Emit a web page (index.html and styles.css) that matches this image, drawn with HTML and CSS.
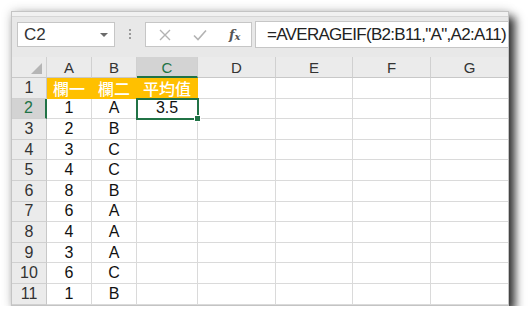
FILE: index.html
```
<!DOCTYPE html>
<html>
<head>
<meta charset="utf-8">
<link rel="stylesheet" href="styles.css">
</head>
<body>
<div class="window">
  <div class="topstrip"></div>
  <div class="fbar">
    <div class="namebox"><span class="nb-text">C2</span><span class="nb-arrow"></span></div>
    <div class="sep"><i></i><i></i><i></i></div>
    <div class="fxgroup">
      <svg class="ico" width="12" height="12" viewBox="0 0 12 12"><path d="M1 1L11 11M11 1L1 11" stroke="#b3b3b3" stroke-width="1.4" fill="none"/></svg>
      <svg class="ico" width="14" height="12" viewBox="0 0 14 12"><path d="M1 6.5L5 10.5L13 1.5" stroke="#b3b3b3" stroke-width="1.6" fill="none"/></svg>
      <span class="fx">f<sub>x</sub></span>
    </div>
    <div class="formula">=AVERAGEIF(B2:B11,"A",A2:A11)</div>
  </div>
  <div class="grid">
    <div class="hd corner"><svg width="11" height="11" viewBox="0 0 11 11"><polygon points="0,11 11,11 11,0" fill="#b5b5b5"/></svg></div>
    <div class="hd">A</div><div class="hd">B</div><div class="hd sel-col">C</div><div class="hd">D</div><div class="hd">E</div><div class="hd">F</div><div class="hd">G</div>

    <div class="rh">1</div><div class="c y">欄一</div><div class="c y">欄二</div><div class="c y">平均值</div><div class="c"></div><div class="c"></div><div class="c"></div><div class="c"></div>
    <div class="rh sel-row">2</div><div class="c">1</div><div class="c">A</div><div class="c active">3.5<span class="handle"></span></div><div class="c"></div><div class="c"></div><div class="c"></div><div class="c"></div>
    <div class="rh">3</div><div class="c">2</div><div class="c">B</div><div class="c"></div><div class="c"></div><div class="c"></div><div class="c"></div><div class="c"></div>
    <div class="rh">4</div><div class="c">3</div><div class="c">C</div><div class="c"></div><div class="c"></div><div class="c"></div><div class="c"></div><div class="c"></div>
    <div class="rh">5</div><div class="c">4</div><div class="c">C</div><div class="c"></div><div class="c"></div><div class="c"></div><div class="c"></div><div class="c"></div>
    <div class="rh">6</div><div class="c">8</div><div class="c">B</div><div class="c"></div><div class="c"></div><div class="c"></div><div class="c"></div><div class="c"></div>
    <div class="rh">7</div><div class="c">6</div><div class="c">A</div><div class="c"></div><div class="c"></div><div class="c"></div><div class="c"></div><div class="c"></div>
    <div class="rh">8</div><div class="c">4</div><div class="c">A</div><div class="c"></div><div class="c"></div><div class="c"></div><div class="c"></div><div class="c"></div>
    <div class="rh">9</div><div class="c">3</div><div class="c">A</div><div class="c"></div><div class="c"></div><div class="c"></div><div class="c"></div><div class="c"></div>
    <div class="rh">10</div><div class="c">6</div><div class="c">C</div><div class="c"></div><div class="c"></div><div class="c"></div><div class="c"></div><div class="c"></div>
    <div class="rh">11</div><div class="c">1</div><div class="c">B</div><div class="c"></div><div class="c"></div><div class="c"></div><div class="c"></div><div class="c"></div>
  </div>
</div>
</body>
</html>
```
FILE: styles.css
```
html, body {
  margin: 0;
  padding: 0;
  background: #ffffff;
}
body {
  padding: 11px 0 0 11px;
  font-family: "Liberation Sans", Arial, sans-serif;
}
.window {
  box-sizing: border-box;
  width: 498px;
  height: 295px;
  background: #e8e8e8;
  border: 1px solid #c4c4c4;
  overflow: hidden;
  box-shadow: 6px 6px 9px rgba(0,0,0,0.8), 0 0 10px rgba(0,0,0,0.18);
}
.topstrip {
  height: 4px;
  background: #f1f1f1;
  border-bottom: 1px solid #d6d6d6;
}
.fbar {
  height: 40px;
  display: flex;
  align-items: flex-start;
  padding-left: 5px;
}
.namebox {
  box-sizing: border-box;
  margin-top: 5px;
  width: 98px;
  height: 25px;
  background: #fff;
  border: 1px solid #c6c6c6;
  display: flex;
  align-items: center;
  justify-content: space-between;
  padding: 0 6px 0 6px;
}
.nb-text {
  font-size: 17px;
  color: #333;
}
.nb-arrow {
  width: 0;
  height: 0;
  border-left: 4px solid transparent;
  border-right: 4px solid transparent;
  border-top: 4px solid #6b6b6b;
  margin-top: 1px;
}
.sep {
  width: 30px;
  height: 40px;
  display: flex;
  flex-direction: column;
  align-items: center;
  justify-content: center;
  gap: 2px;
  padding-bottom: 6px;
  box-sizing: border-box;
}
.sep i {
  display: block;
  width: 2px;
  height: 2px;
  background: #9a9a9a;
}
.fxgroup {
  box-sizing: border-box;
  margin-top: 5px;
  width: 107px;
  height: 25px;
  background: #fff;
  border: 1px solid #c6c6c6;
  display: flex;
  align-items: center;
  padding-left: 13px;
}
.ico { display: block; }
.fxgroup .ico + .ico { margin-left: 22px; }
.fx {
  margin-left: 22px;
  font-family: "DejaVu Serif", "Liberation Serif", serif;
  font-style: italic;
  font-weight: bold;
  font-size: 13px;
  color: #555;
  line-height: 1;
}
.fx sub {
  font-size: 10px;
  vertical-align: -1px;
}
.formula {
  box-sizing: border-box;
  margin-top: 4px;
  margin-left: 3px;
  flex: 1;
  height: 27px;
  background: #fff;
  border: 1px solid #c6c6c6;
  border-right: none;
  font-size: 17px;
  letter-spacing: -0.7px;
  color: #222;
  display: flex;
  align-items: center;
  padding-left: 11px;
  white-space: nowrap;
}
.grid {
  display: grid;
  grid-template-columns: 35px 45px 45px 61px 78px 77px 78px 78px;
  grid-template-rows: 21px;
  grid-auto-rows: 20.6px;
  background: #fff;
}
.grid > div {
  box-sizing: border-box;
  display: flex;
  align-items: center;
  justify-content: center;
  white-space: nowrap;
}
.hd {
  background: #ebebeb;
  border-right: 1px solid #d0d0d0;
  border-bottom: 1px solid #c8c8c8;
  font-size: 15px;
  color: #333;
  padding-top: 1px;
}
.grid > .corner {
  justify-content: flex-end;
  align-items: flex-end;
  padding: 0 4px 3px 0;
}
.grid > .sel-col {
  background: #d3d3d3;
  border-bottom: 2px solid #217346;
  color: #217346;
}
.rh {
  background: #ebebeb;
  border-right: 1px solid #c8c8c8;
  border-bottom: 1px solid #d0d0d0;
  font-size: 16px;
  color: #333;
}
.grid > .sel-row {
  background: #d3d3d3;
  border-right: 2px solid #217346;
  color: #217346;
}
.c {
  border-right: 1px solid #dadada;
  border-bottom: 1px solid #dadada;
  font-size: 16px;
  color: #111;
}
.grid > .y {
  background: #ffc000;
  border-color: #ffc000;
  color: #fff;
  font-family: "Noto Sans CJK TC", "Noto Sans CJK SC", sans-serif;
  font-size: 16px;
  font-weight: 500;
}
.grid > .active {
  position: relative;
  outline: 2px solid #217346;
  outline-offset: -1px;
}
.handle {
  position: absolute;
  right: -3px;
  bottom: -3px;
  width: 5px;
  height: 5px;
  background: #217346;
  border: 1px solid #fff;
  box-sizing: content-box;
  margin: -1px;
}
```
